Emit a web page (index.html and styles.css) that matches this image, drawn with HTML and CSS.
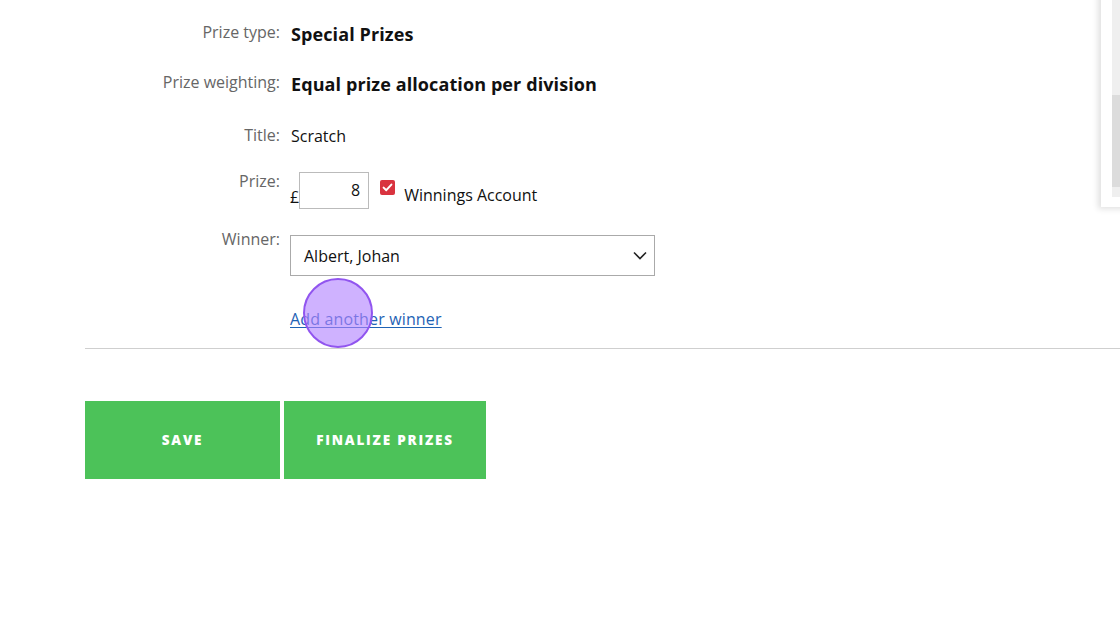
FILE: index.html
```html
<!DOCTYPE html>
<html>
<head>
<meta charset="utf-8">
<link rel="stylesheet" href="styles.css">
</head>
<body>
<div class="page">
  <div class="form">
    <div class="row r-type">
      <div class="label">Prize type:</div>
      <div class="value strong">Special Prizes</div>
    </div>
    <div class="row r-weight">
      <div class="label">Prize weighting:</div>
      <div class="value strong">Equal prize allocation per division</div>
    </div>
    <div class="row r-title">
      <div class="label">Title:</div>
      <div class="value">Scratch</div>
    </div>
    <div class="row r-prize">
      <div class="label">Prize:</div>
      <div class="value prize">
        <span class="pound">£</span>
        <span class="amount">8</span>
        <span class="check"><svg width="15" height="15" viewBox="0 0 15 15"><rect x="0" y="0" width="15" height="15" rx="2" fill="#d9333f"/><path d="M3.6 7.6 L6.3 10.2 L11.4 4.6" fill="none" stroke="#fff" stroke-width="2" stroke-linecap="round" stroke-linejoin="round"/></svg></span>
        <span class="check-label">Winnings Account</span>
      </div>
    </div>
    <div class="row r-winner">
      <div class="label">Winner:</div>
      <div class="value">
        <div class="select">
          <span>Albert, Johan</span>
          <svg width="14" height="9" viewBox="0 0 14 9"><path d="M1 1.5 L7 7.5 L13 1.5" fill="none" stroke="#222" stroke-width="1.6"/></svg>
        </div>
      </div>
    </div>
    <div class="row r-link">
      <div class="label"></div>
      <div class="value"><a class="link" href="#">Add another winner</a></div>
    </div>
  </div>
  <div class="divider"></div>
  <div class="buttons">
    <button class="btn btn-save">SAVE</button>
    <button class="btn btn-final">FINALIZE PRIZES</button>
  </div>
  <div class="click-dot"></div>
  <div class="side-panel"><div class="track"><div class="thumb"></div></div></div>
</div>
</body>
</html>
```

FILE: styles.css
```css
* { box-sizing: border-box; }
html, body { margin: 0; padding: 0; background: #fff; }
body { font-family: "Open Sans", "Liberation Sans", sans-serif; color: #111; overflow: hidden; }
.page { position: relative; width: 1120px; height: 626px; padding-left: 85px; }
.form { display: flex; flex-direction: column; }
.row { display: grid; grid-template-columns: 195px 1fr; column-gap: 11px; align-items: center; }
.label { text-align: right; font-size: 16px; color: #666; line-height: 22px; }
.value { font-size: 16px; line-height: 22px; color: #111; }
.strong { font-weight: 700; font-size: 18px; letter-spacing: 0.1px; }
.r-type { margin-top: 22px; height: 22px; }
.r-type .label, .r-weight .label { margin-top: -3px; }
.r-type .value, .r-weight .value { margin-top: 1px; }
.r-weight { margin-top: 28px; height: 22px; }
.r-title { margin-top: 30px; height: 22px; }
.r-title .value { margin-top: 1px; }
.r-title .label { margin-top: -2px; }
.r-prize { margin-top: 26px; align-items: start; }
.r-prize .label { margin-top: -2px; }
.prize { display: flex; align-items: flex-end; }
.pound { font-size: 16px; line-height: 20px; margin-left: -1px; padding-bottom: 2px; }
.amount { width: 70px; height: 37px; border: 1px solid #bbb; text-align: right; padding: 6px 8px 0 0; font-size: 16px; line-height: 22px; }
.check { align-self: flex-start; margin: 8px 0 0 11px; height: 15px; }
.check svg { display: block; }
.check-label { margin-left: 9px; padding-bottom: 3px; font-size: 16px; }
.r-winner { margin-top: 26px; align-items: start; }
.r-winner .label { margin-top: -7px; }
.select { width: 365px; height: 41px; border: 1px solid #aaa; display: flex; align-items: center; justify-content: space-between; padding: 0 7px 0 13px; margin-left: -1px; font-size: 16px; }
.select svg { display: block; }
.r-link { margin-top: 32px; }
.link { color: #1f63b5; font-size: 16px; letter-spacing: 0.15px; text-decoration: underline; text-underline-offset: 2px; text-decoration-thickness: 1px; margin-left: -1px; }
.divider { margin-top: 18px; height: 1px; background: #cfcfcf; width: 1035px; }
.buttons { display: flex; gap: 4px; margin-top: 52px; }
.btn { border: none; background: #4cc259; color: #fff; font-family: "Open Sans", "Liberation Sans", sans-serif; font-weight: 800; font-size: 13.5px; letter-spacing: 1.8px; height: 78px; cursor: pointer; }
.btn-save { width: 195px; }
.btn-final { width: 202px; }
.click-dot { position: absolute; left: 303px; top: 278px; width: 70px; height: 70px; border-radius: 50%; background: rgba(178, 130, 255, 0.62); border: 2px solid #9155ef; }
.side-panel { position: absolute; left: 1101px; top: -10px; width: 40px; height: 217px; background: #fff; box-shadow: -3px 2px 6px rgba(0,0,0,0.12); }
.track { position: absolute; left: 11px; top: 0; width: 30px; height: 207px; background: #efefef; }
.thumb { position: absolute; left: 0; top: 105px; width: 30px; height: 92px; background: #dcdcdc; }
```
